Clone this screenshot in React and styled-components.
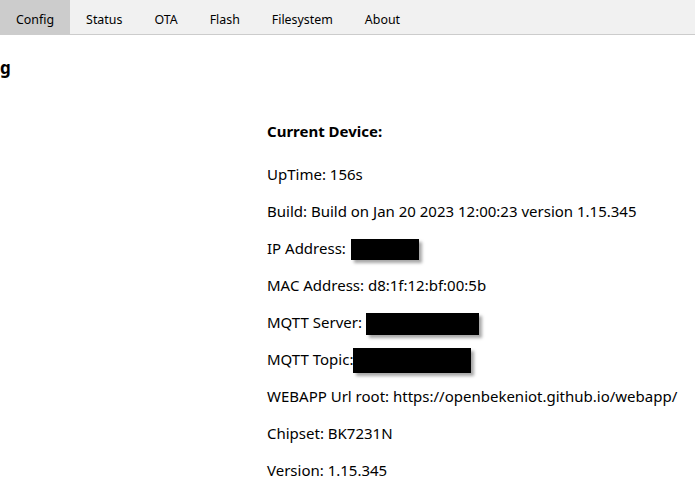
import React from 'react';
import styled, { createGlobalStyle } from 'styled-components';

const GlobalStyle = createGlobalStyle`
    html, body {
        margin: 0;
        padding: 0;
        background: #fff;
        font-family: 'Noto Sans', 'Open Sans', sans-serif;
        color: #000;
        overflow: hidden;
    }
`;

const TabBar = styled.div`
    display: flex;
    height: 34px;
    background-color: #f1f1f1;
    border-bottom: 1px solid #cccccc;
`;

const Tab = styled.button`
    border: none;
    outline: none;
    padding: 4px 16px 0;
    height: 34px;
    font-family: inherit;
    font-size: 12.4px;
    color: #000;
    cursor: pointer;
    background-color: ${(p) => (p.active ? '#cccccc' : 'transparent')};
`;

const Title = styled.h3`
    margin: 0;
    padding: 22px 0 0 0;
    font-size: 17px;
    font-weight: bold;
    line-height: 22px;
`;

const Info = styled.div`
    padding: 42px 0 0 267px;
`;

const Heading = styled.p`
    margin: 0 0 22px;
    font-size: 15px;
    font-weight: bold;
    line-height: 21px;
`;

const Line = styled.p`
    margin: 0 0 16px;
    font-size: 15px;
    line-height: 21px;
    height: 21px;
    white-space: nowrap;
`;

const Redacted = styled.span`
    display: inline-block;
    vertical-align: middle;
    width: ${(p) => p.w}px;
    height: ${(p) => p.h}px;
    margin: -6px 0 -6px ${(p) => p.gap}px;
    background: #000;
    box-shadow: 3px 3px 3px rgba(0, 0, 0, 0.35);
`;

const tabs = ['Config', 'Status', 'OTA', 'Flash', 'Filesystem', 'About'];

const App = () => {
    return (
        <>
            <GlobalStyle />
            <TabBar>
                {tabs.map((t) => (
                    <Tab key={t} active={t === 'Config'}>
                        {t}
                    </Tab>
                ))}
            </TabBar>
            <Title>g</Title>
            <Info>
                <Heading>Current Device:</Heading>
                <Line>UpTime: 156s</Line>
                <Line>Build: Build on Jan 20 2023 12:00:23 version 1.15.345</Line>
                <Line>
                    IP Address:
                    <Redacted w={68} h={21} gap={5} />
                </Line>
                <Line>MAC Address: d8:1f:12:bf:00:5b</Line>
                <Line>
                    MQTT Server:
                    <Redacted w={113} h={22} gap={4} />
                </Line>
                <Line>
                    MQTT Topic:
                    <Redacted w={118} h={25} gap={0} />
                </Line>
                <Line>WEBAPP Url root: https://openbekeniot.github.io/webapp/</Line>
                <Line>Chipset: BK7231N</Line>
                <Line>Version: 1.15.345</Line>
            </Info>
        </>
    );
};

export default App;
